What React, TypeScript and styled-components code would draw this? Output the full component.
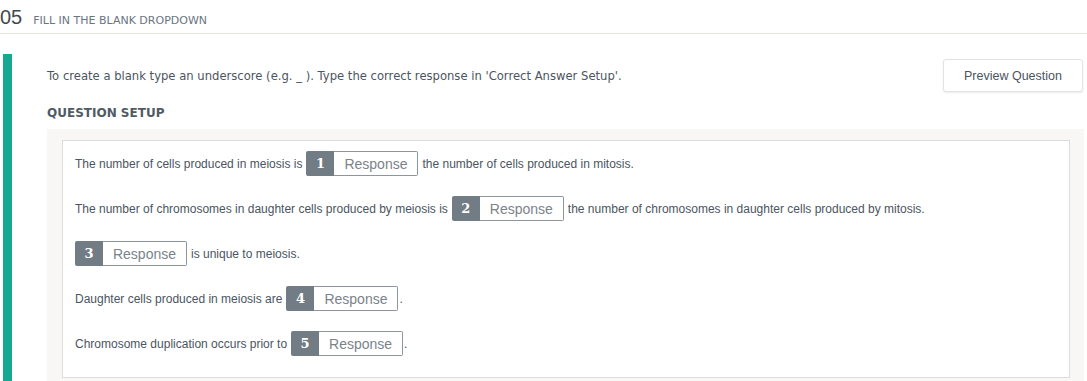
import React from "react";
import styled, { createGlobalStyle } from "styled-components";

const GlobalStyle = createGlobalStyle`
  body {
    margin: 0;
    background: #ffffff;
    font-family: "Liberation Sans", Arial, sans-serif;
    color: #4b5561;
  }
`;

const Header = styled.header`
  display: flex;
  align-items: baseline;
  gap: 11px;
  height: 34px;
  box-sizing: border-box;
  padding-top: 7px;
  line-height: 20px;
  border-bottom: 1px solid #e9e3de;
`;

const Number = styled.span`
  font-size: 20px;
  color: #3f4952;
`;

const Title = styled.span`
  font-family: "DejaVu Sans", Verdana, sans-serif;
  font-size: 11px;
  color: #6b7580;
  text-transform: uppercase;
`;

const Section = styled.section`
  display: flex;
  margin-top: 20px;
`;

const AccentBar = styled.div`
  width: 9px;
  margin-left: 3px;
  background: #17a892;
  flex-shrink: 0;
`;

const Content = styled.div`
  flex: 1;
  margin-left: 35px;
  padding: 5px 3px 0 0;
`;

const InfoRow = styled.div`
  display: flex;
  align-items: center;
  justify-content: space-between;
  height: 33px;
`;

const Hint = styled.p`
  margin: 0;
  font-family: "DejaVu Sans", Verdana, sans-serif;
  font-size: 11.6px;
  color: #4b5561;
`;

const PreviewButton = styled.button`
  width: 140px;
  height: 33px;
  margin-right: 1px;
  background: #fff;
  border: 1px solid #e3e3e3;
  border-radius: 3px;
  box-shadow: 0 1px 2px rgba(0, 0, 0, 0.08);
  font-family: "Liberation Sans", Arial, sans-serif;
  font-size: 12.5px;
  color: #4b5561;
  cursor: pointer;
`;

const Heading = styled.h3`
  margin: 13px 0 8px;
  font-family: "DejaVu Sans", Verdana, sans-serif;
  font-size: 12px;
  line-height: 16px;
  font-weight: bold;
  color: #4f5a65;
  text-transform: uppercase;
`;

const Panel = styled.div`
  background: #f8f7f5;
  padding: 11px 14px 11px 15px;
`;

const QuestionBox = styled.div`
  display: flex;
  flex-direction: column;
  gap: 20px;
  padding: 10px 12px 21px;
  background: #fff;
  border: 1px solid #dcdcdc;
`;

const Sentence = styled.div`
  display: flex;
  align-items: center;
  gap: 4px;
  height: 25px;
  font-size: 12px;
  color: #4b5561;
  white-space: pre;
`;

const Punct = styled.span`
  margin-left: -3px;
`;

const Blank = styled.span`
  display: inline-flex;
  height: 25px;
`;

const BlankIndex = styled.span`
  display: flex;
  align-items: center;
  justify-content: center;
  width: 28px;
  background: #717c85;
  border-radius: 2px 0 0 2px;
  color: #fff;
  font-family: "DejaVu Serif", Georgia, serif;
  font-weight: bold;
  font-size: 13px;
`;

const BlankField = styled.span`
  display: flex;
  align-items: center;
  justify-content: center;
  width: 84px;
  box-sizing: border-box;
  border: 1px solid #8d969d;
  border-left: none;
  border-radius: 0 2px 2px 0;
  font-size: 14px;
  color: #7b838a;
`;

type Part = string | number;

const sentences: Part[][] = [
  ["The number of cells produced in meiosis is", 1, "the number of cells produced in mitosis."],
  [
    "The number of chromosomes in daughter cells produced by meiosis is",
    2,
    "the number of chromosomes in daughter cells produced by mitosis.",
  ],
  [3, "is unique to meiosis."],
  ["Daughter cells produced in meiosis are", 4, "."],
  ["Chromosome duplication occurs prior to", 5, "."],
];

const renderPart = (part: Part, key: number) => {
  if (typeof part === "number") {
    return (
      <Blank key={key}>
        <BlankIndex>{part}</BlankIndex>
        <BlankField>Response</BlankField>
      </Blank>
    );
  }
  if (part === ".") return <Punct key={key}>{part}</Punct>;
  return <span key={key}>{part}</span>;
};

const App: React.FC = () => {
  return (
    <>
      <GlobalStyle />
      <Header>
        <Number>05</Number>
        <Title>Fill in the blank dropdown</Title>
      </Header>
      <Section>
        <AccentBar />
        <Content>
          <InfoRow>
            <Hint>
              To create a blank type an underscore (e.g. _ ). Type the correct response in 'Correct
              Answer Setup'.
            </Hint>
            <PreviewButton>Preview Question</PreviewButton>
          </InfoRow>
          <Heading>Question Setup</Heading>
          <Panel>
            <QuestionBox>
              {sentences.map((parts, i) => (
                <Sentence key={i}>{parts.map(renderPart)}</Sentence>
              ))}
            </QuestionBox>
          </Panel>
        </Content>
      </Section>
    </>
  );
};

export default App;
